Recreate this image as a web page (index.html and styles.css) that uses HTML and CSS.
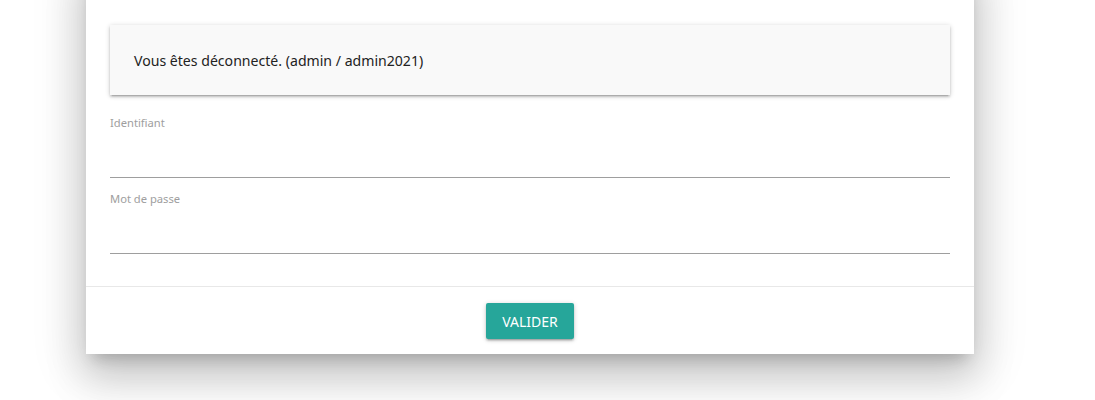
FILE: index.html
```html
<!DOCTYPE html>
<html lang="fr">
<head>
<meta charset="utf-8">
<title>Connexion</title>
<link rel="stylesheet" href="styles.css">
</head>
<body>
<div class="modal">
  <div class="modal-content">
    <div class="panel">Vous êtes déconnecté. (admin / admin2021)</div>
    <div class="field">
      <label class="label" for="login">Identifiant</label>
      <input class="input" id="login" type="text">
    </div>
    <div class="field">
      <label class="label" for="pass">Mot de passe</label>
      <input class="input" id="pass" type="password">
    </div>
  </div>
  <div class="modal-footer">
    <button class="btn" type="button">VALIDER</button>
  </div>
</div>
</body>
</html>
```
FILE: styles.css
```css
html, body {
  margin: 0;
  padding: 0;
  background: #fff;
  font-family: "Noto Sans", "Open Sans", sans-serif;
}
body {
  height: 400px;
  overflow: hidden;
}
.modal {
  margin: -40px 0 0 86px;
  width: 888px;
  background: #fff;
  box-shadow: 0 24px 38px 3px rgba(0,0,0,0.14), 0 9px 46px 8px rgba(0,0,0,0.12), 0 11px 15px -7px rgba(0,0,0,0.2);
}
.modal-content {
  padding: 65px 24px 32px 24px;
  display: flex;
  flex-direction: column;
}
.panel {
  height: 70px;
  box-sizing: border-box;
  padding: 0 24px;
  display: flex;
  align-items: center;
  background: #f9f9f9;
  color: #222;
  font-size: 14.1px;
  box-shadow: 0 2px 2px 0 rgba(0,0,0,.14), 0 3px 1px -2px rgba(0,0,0,.12), 0 1px 5px 0 rgba(0,0,0,.2);
  margin-bottom: 20px;
}
.field {
  display: flex;
  flex-direction: column;
}
.field + .field {
  margin-top: 13px;
}
.label {
  font-size: 11.2px;
  line-height: 16px;
  color: #9e9e9e;
}
.input {
  height: 46px;
  border: none;
  border-bottom: 1px solid #9e9e9e;
  padding: 0;
  margin: 0;
  outline: none;
  background: transparent;
  font-size: 16px;
  box-sizing: content-box;
}
.modal-footer {
  border-top: 1px solid #e8e8e8;
  padding: 16px 0 15px;
  display: flex;
  justify-content: center;
}
.btn {
  width: 88px;
  height: 36px;
  border: none;
  border-radius: 2px;
  background: #26a69a;
  color: #fff;
  font-family: "Noto Sans", "Open Sans", sans-serif;
  font-size: 14px;
  padding: 0;
  box-shadow: 0 2px 2px 0 rgba(0,0,0,.14), 0 3px 1px -2px rgba(0,0,0,.12), 0 1px 5px 0 rgba(0,0,0,.2);
}
```
